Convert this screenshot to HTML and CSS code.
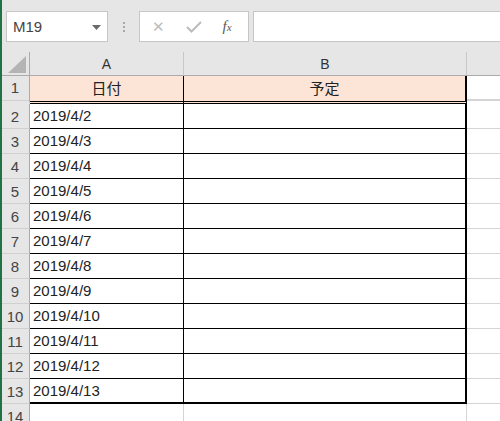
FILE: index.html
```html
<!DOCTYPE html>
<html lang="ja">

<head>
    <meta charset="UTF-8">
    <meta name="viewport" content="width=device-width, initial-scale=1.0">
    <title>Book1</title>
    <link rel="stylesheet" href="styles.css">
</head>

<body>
    <div class="bar">
        <div class="nameBox">
            <span>M19</span>
            <svg class="arrow" width="9" height="5" viewBox="0 0 9 5"><polygon points="0,0 9,0 4.5,5" fill="#6a6a6a"/></svg>
        </div>
        <div class="dots"><i></i><i></i><i></i></div>
        <div class="btns">
            <span class="btn x">&#x2715;</span>
            <svg class="btn" width="16" height="12" viewBox="0 0 16 12"><polyline points="1,6 5.5,10.5 15,1" fill="none" stroke="#bcbcbc" stroke-width="2"/></svg>
            <span class="btn fx">f<sub>x</sub></span>
        </div>
        <div class="formula"></div>
    </div>

    <div class="sheet">
        <div class="corner"><svg width="18" height="17" viewBox="0 0 18 17"><polygon points="18,0 18,17 0,17" fill="#b4b4b4"/></svg></div>
        <div class="colHead">A</div>
        <div class="colHead">B</div>
        <div class="colHead last">C</div>
    </div>
    <div class="sheet rows"></div>

    <script>
        let rows = document.querySelector(".rows")
        let html = ""
        for (let i = 1; i <= 14; i++) {
            let cls = i == 1 ? " first" : (i == 13 ? " end" : (i == 14 ? " after" : ""))
            let a = i == 1 ? "日付" : (i <= 13 ? `2019/4/${i}` : "")
            let b = i == 1 ? "予定" : ""
            html += `<div class="rowHead${cls}">${i}</div>
            <div class="cell a${cls}">${a}</div>
            <div class="cell b${cls}">${b}</div>
            <div class="cell c${cls}"></div>`
        }
        rows.innerHTML = html
    </script>
</body>

</html>
```

FILE: styles.css
```css
body {
    margin: 0;
    overflow: hidden;
    width: 500px;
    height: 421px;
    background-color: white;
    font-family: "Liberation Sans", "Noto Sans CJK JP", sans-serif;
    font-size: 15px;
    color: #222;
    border-left: 2px solid #217346;
    box-sizing: border-box;
}

.bar {
    height: 52px;
    background-color: #e6e6e6;
    display: flex;
    align-items: flex-start;
    padding-top: 11px;
    box-sizing: border-box;
}

.nameBox {
    width: 102px;
    height: 31px;
    margin-left: 4px;
    background-color: white;
    border: 1px solid #c6c6c6;
    box-sizing: border-box;
    display: flex;
    align-items: center;
    justify-content: space-between;
    padding: 0 6px 0 6px;
    color: #444;
    font-size: 15px;
}

.arrow {
    margin-top: 1px;
}

.dots {
    width: 31px;
    height: 31px;
    display: flex;
    flex-direction: column;
    align-items: center;
    justify-content: center;
    gap: 2px;
}

.dots i {
    width: 2px;
    height: 2px;
    background-color: #a8a8a8;
}

.btns {
    width: 110px;
    height: 31px;
    background-color: white;
    border: 1px solid #c6c6c6;
    box-sizing: border-box;
    display: flex;
    align-items: center;
    justify-content: space-around;
    padding: 0 6px 0 2px;
}

.x {
    color: #bcbcbc;
    font-size: 15px;
}

.fx {
    font-family: "Liberation Serif", serif;
    font-style: italic;
    color: #5a5a5a;
    font-size: 15px;
}

.fx sub {
    font-size: 11px;
    vertical-align: 0;
}

.formula {
    flex: 1;
    height: 31px;
    margin-left: 4px;
    background-color: white;
    border: 1px solid #c6c6c6;
    border-right: none;
    box-sizing: border-box;
}

.sheet {
    display: grid;
    grid-template-columns: 28px 154px 283px 62px;
}

.corner,
.colHead {
    height: 24px;
    background-color: #e6e6e6;
    border-bottom: 1px solid #ababab;
    border-right: 1px solid #c8c8c8;
    box-sizing: border-box;
    display: flex;
    align-items: center;
    justify-content: center;
    color: #333;
    font-size: 14px;
}

.corner {
    align-items: flex-end;
    justify-content: flex-end;
    padding: 0 3px 2px 0;
    border-right-color: #ababab;
}

.colHead.last {
    justify-content: flex-end;
    padding-right: 0;
    color: #b07020;
}

.rowHead {
    height: 25px;
    background-color: #e6e6e6;
    border-right: 1px solid #ababab;
    border-bottom: 1px solid #d0d0d0;
    box-sizing: border-box;
    display: flex;
    align-items: center;
    justify-content: center;
    color: #444;
    font-size: 15px;
    padding-right: 1px;
}

.cell {
    height: 25px;
    box-sizing: border-box;
    border-right: 1px solid black;
    border-bottom: 1px solid black;
    display: flex;
    align-items: center;
    padding: 0 0 1px 3px;
    white-space: nowrap;
}

.cell.b {
    border-right: 2px solid black;
}

.cell.c {
    border-right: 1px solid #d4d4d4;
    border-bottom: 1px solid #d4d4d4;
}

.first {
    height: 28px;
}

.rowHead.first {
    border-bottom: 3px solid #e6e6e6;
    box-shadow: inset 0 -1px 0 #d0d0d0;
    padding-bottom: 2px;
}

.cell.a.first,
.cell.b.first {
    background-color: #fce4d6;
    border-bottom: 3px double black;
    justify-content: center;
    padding: 0 0 2px 0;
}

.cell.c.first {
    border-bottom: 3px solid white;
    box-shadow: inset 0 -2px 0 #d4d4d4;
}

.cell.a.end,
.cell.b.end {
    border-bottom: 2px solid black;
}

.cell.after {
    border-right: 1px solid #d4d4d4;
    border-bottom: 1px solid #d4d4d4;
}
```
